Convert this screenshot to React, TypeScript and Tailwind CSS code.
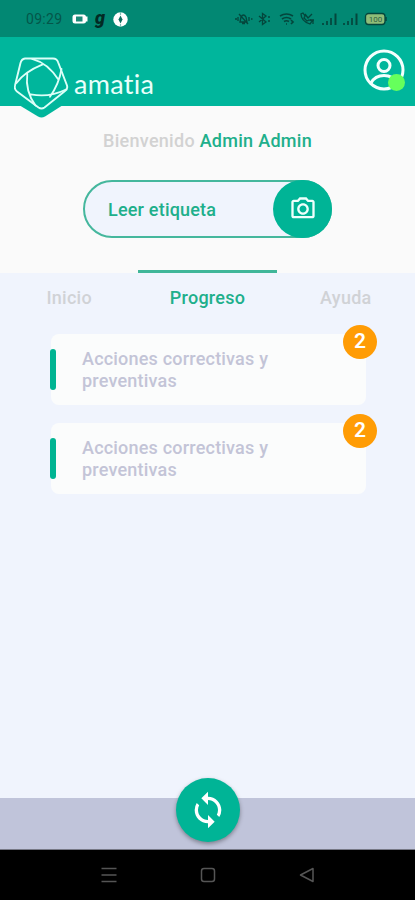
import { MdOutlinePhotoCamera, MdSync } from "react-icons/md";

const tabs = [
  { label: "Inicio", active: false },
  { label: "Progreso", active: true },
  { label: "Ayuda", active: false },
];

const actions = [
  { id: 1, title: "Acciones correctivas y preventivas", count: 2 },
  { id: 2, title: "Acciones correctivas y preventivas", count: 2 },
];

function StatusBar() {
  return (
    <div className="flex h-[37px] items-center bg-[#028873] pt-px pr-[26px] pl-[26px] text-[#04564a]">
      <span className="w-[37px] font-['Roboto',sans-serif] text-[14px] leading-none tracking-[0.3px]">09:29</span>
      {/* left notifications */}
      <svg className="ml-[9px] h-[10px] w-4" viewBox="0 0 16 10">
        <rect x="0.500" y="0.500" width="13.500" height="9" rx="2.500" fill="#fff" />
        <rect x="14" y="2.500" width="1.500" height="5" fill="#fff" />
        <rect x="4" y="2.500" width="6.500" height="5" fill="#1b8a78" />
      </svg>
      <span className="-mt-[3px] ml-[7px] w-[10px] font-['Roboto',sans-serif] text-[18px] leading-none font-black text-[#022a24] italic">g</span>
      <svg className="ml-[8px] h-[15px] w-[15px]" viewBox="0 0 15 15">
        <circle cx="7.500" cy="7.500" r="7.200" fill="#fff" />
        <path d="M7.500 0v3M7.500 12v3" stroke="#7fc0b5" strokeWidth="1.200" />
        <path d="M7.500 3.500 9.500 7.500l-2 4-2-4z" fill="#0c6d5d" />
      </svg>
      {/* right system icons */}
      <svg className="ml-auto h-[16px] w-[155px]" viewBox="0 0 155 16" fill="none" stroke="#04463c" strokeWidth="1.300">
        <path d="M1 8h2M4 6v4M6 11l1-5q2.500-4 5 0l1 5zM8 12.500h3M5 3l9 10M15 6v4M17 8h1.500" />
        <path d="M25 5l7 6-3.500 2.500v-11L32 5l-7 6M34 6h2M34 10h2" />
        <path d="M46 5q6.500-4 13 0M48 8q4.500-3 9 0M50 10.500q2.500-1.500 5 0M52 13h1M57 9l2 2-2 2" strokeWidth="1.700" />
        <path d="M67 3q0 7 9 10l2-3-3-1-2 1-3-3 1-2-2-3zM71 3l3 4 4-4M79 9v4M76 9h4" />
        <path d="M89 12v2M93 10v4M97 7v7" strokeWidth="1.700" />
        <path d="M101.500 2.500v11.500" strokeWidth="2" />
        <path d="M110 12v2M114 10v4M118 7v7" strokeWidth="1.700" />
        <path d="M122.500 2.500v11.500" strokeWidth="2" />
        <rect x="131.500" y="2.500" width="19.500" height="11" rx="3" fill="#8fbd78" />
        <path d="M152 6v4" strokeWidth="1.500" />
        <text x="141.500" y="11" textAnchor="middle" fill="#315f43" stroke="none" fontFamily="Roboto, sans-serif" fontSize="8">100</text>
      </svg>
    </div>
  );
}

function Logo() {
  return (
    <svg className="h-[69px] w-[60px]" viewBox="0 0 60 69" fill="none">
      <path d="M5 56 24 67.500Q27.500 69.500 31 67.500L49 56V44H5z" fill="#00b69c" />
      <path
        d="M11 9.500h28q4 0 5.200 4l8.800 23q1 3.500-2 5.500L30.500 58.500q-3 2-6 0L3 42.500q-3-2.500-2-6L6.500 14q1-4 4.500-4.500z"
        stroke="#dcfff8"
        strokeWidth="1.900"
      />
      <path
        d="M2.500 34Q10 23 28.700 15.300M18 9.800Q34 14 44.700 31M47.500 20Q45 35 36 47.700M52 40.500Q35 49 16.700 45.300M21.500 56.500Q11 42 13.300 25"
        stroke="#dcfff8"
        strokeWidth="1.800"
        strokeLinecap="round"
      />
    </svg>
  );
}

function Header() {
  return (
    <header className="flex h-[69px] items-start justify-between bg-[#00b69c] pr-[10px] pl-[14px]">
      <div className="relative z-10 flex pt-[12px]">
        <Logo />
        <span className="mt-[19px] font-['Lato',sans-serif] text-[27px] leading-[32px] tracking-[0.3px] text-[#e9fffb]">
          amatia
        </span>
      </div>
      <div className="relative mt-[12px] h-[42px] w-[42px]">
        <svg className="h-[42px] w-[42px]" viewBox="0 0 42 42" fill="none" stroke="#f4fffd" strokeWidth="3">
          <circle cx="21" cy="21" r="19" />
          <circle cx="21" cy="16.500" r="6" />
          <path d="M8 34q4-7.500 13-7.500T34 34" />
        </svg>
        <span className="absolute right-0 bottom-0 h-[17px] w-[17px] rounded-full bg-[#66ff5c]" />
      </div>
    </header>
  );
}

function ActionCard({ title, count }: { title: string; count: number }) {
  return (
    <div className="relative flex h-[71px] items-center rounded-[8px] bg-[#fbfcfc]">
      <span className="-ml-px h-[41px] w-[6px] shrink-0 rounded-full bg-[#00b492]" />
      <p className="ml-[26px] w-[210px] text-[18px] leading-[22px] font-medium tracking-[0.2px] text-[#c3c4d7]">{title}</p>
      <span className="absolute -top-[9px] -right-[11px] flex h-[34px] w-[34px] items-center justify-center rounded-full bg-[#ff9c05] text-[21px] font-semibold text-white">
        {count}
      </span>
    </div>
  );
}

function SystemNav() {
  return (
    <div className="flex h-[50px] items-center justify-center gap-[83px] bg-black">
      <svg className="h-4 w-4" viewBox="0 0 16 16" stroke="#555" strokeWidth="1.500">
        <path d="M.5 1.500h15M.5 8h15M.5 14.500h15" />
      </svg>
      <svg className="h-4 w-4" viewBox="0 0 16 16" fill="none" stroke="#555" strokeWidth="1.500">
        <rect x="1.500" y="1.500" width="13" height="13" rx="2.500" />
      </svg>
      <svg className="h-4 w-4" viewBox="0 0 16 16" fill="none" stroke="#555" strokeWidth="1.500" strokeLinejoin="round">
        <path d="M14 1.500v13L1.500 8z" />
      </svg>
    </div>
  );
}

export default function App() {
  return (
    <div className="flex h-[900px] w-[415px] flex-col overflow-hidden bg-[#f0f4fd] font-['Roboto',sans-serif]">
      <StatusBar />
      <Header />

      {/* Welcome */}
      <section className="flex h-[167px] shrink-0 flex-col items-center bg-[#fafafa]">
        <p className="mt-[24px] text-[18px] leading-[22px] font-medium tracking-[0.28px] text-[#d2d2d2]">
          Bienvenido <span className="text-[#20af8b]">Admin Admin</span>
        </p>
        <button className="mt-[28px] flex h-[58px] w-[249px] items-center justify-between rounded-full border-2 border-[#45b79d] bg-[#f0f4fd] pl-[23px]">
          <span className="text-[18px] font-medium tracking-[0.2px] text-[#20af8b]">Leer etiqueta</span>
          <span className="-mr-[2px] flex h-[58px] w-[59px] shrink-0 items-center justify-center rounded-full bg-[#00b496]">
            <MdOutlinePhotoCamera className="text-[28px] text-[#eefffc]" />
          </span>
        </button>
      </section>

      {/* Tabs */}
      <nav className="-mt-[3px] grid h-[64px] shrink-0 grid-cols-3">
        {tabs.map((tab) => (
          <div
            key={tab.label}
            className={
              tab.active
                ? "border-t-[3px] border-[#40b699] pt-[14px] text-center text-[18px] leading-[22px] font-medium tracking-[0.25px] text-[#20af8b]"
                : "border-t-[3px] border-transparent pt-[14px] text-center text-[18px] leading-[22px] font-medium tracking-[0.25px] text-[#d0d2d6]"
            }
          >
            {tab.label}
          </div>
        ))}
      </nav>

      <main className="flex flex-1 flex-col gap-[18px] pr-[49px] pl-[51px]">
        {actions.map((action) => (
          <ActionCard key={action.id} title={action.title} count={action.count} />
        ))}
      </main>

      <footer className="relative flex h-[52px] justify-center border-b border-[#777986] bg-[#c0c4da]">
        <button className="absolute -top-[20px] flex h-[64px] w-[64px] items-center justify-center rounded-full bg-[#00b496] shadow-[0_2px_4px_rgba(0,0,0,0.35)]">
          <MdSync className="text-[40px] text-white" />
        </button>
      </footer>
      <SystemNav />
    </div>
  );
}
